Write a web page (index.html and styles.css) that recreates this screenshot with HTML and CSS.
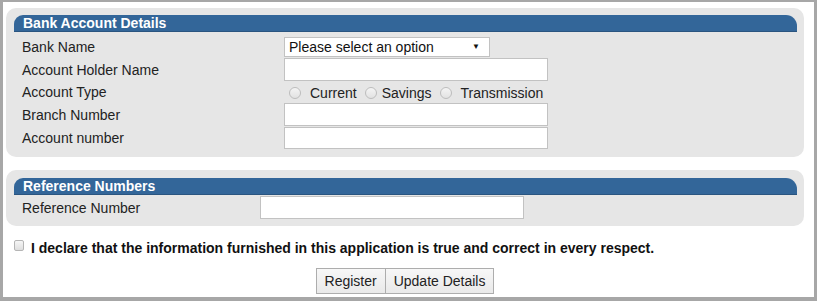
FILE: index.html
```html
<!DOCTYPE html>
<html>
<head>
<meta charset="utf-8">
<link rel="stylesheet" href="styles.css">
</head>
<body>
<div class="frame">
  <section class="panel panel-bank">
    <h2 class="panel-head">Bank Account Details</h2>
    <div class="form-grid grid-bank">
      <label class="lbl">Bank Name</label>
      <div class="select-wrap">
        <select class="select"><option>Please select an option</option></select>
        <span class="arrow">&#9660;</span>
      </div>
      <label class="lbl">Account Holder Name</label>
      <input class="txt" type="text">
      <label class="lbl">Account Type</label>
      <div class="radios">
        <span class="opt"><input type="radio" name="t" class="radio"><span class="opt-text">Current</span></span>
        <span class="opt opt-tight"><input type="radio" name="t" class="radio"><span class="opt-text">Savings</span></span>
        <span class="opt"><input type="radio" name="t" class="radio"><span class="opt-text">Transmission</span></span>
      </div>
      <label class="lbl">Branch Number</label>
      <input class="txt" type="text">
      <label class="lbl">Account number</label>
      <input class="txt txt-short" type="text">
    </div>
  </section>

  <section class="panel panel-ref">
    <h2 class="panel-head">Reference Numbers</h2>
    <div class="form-grid grid-ref">
      <label class="lbl">Reference Number</label>
      <input class="txt" type="text">
    </div>
  </section>

  <div class="declare">
    <input type="checkbox" class="check">
    <span class="declare-text">I declare that the information furnished in this application is true and correct in every respect.</span>
  </div>

  <div class="actions">
    <button class="btn">Register</button>
    <button class="btn btn-join">Update Details</button>
  </div>
</div>
</body>
</html>
```

FILE: styles.css
```css
html, body {
  margin: 0;
  padding: 0;
  background: #ffffff;
}

body {
  font-family: "Liberation Sans", Arial, sans-serif;
  font-size: 14px;
  color: #222222;
}

.frame {
  width: 817px;
  height: 301px;
  box-sizing: border-box;
  border: 3px solid #a7a7a7;
  border-top-width: 2px;
  border-bottom-width: 4px;
  padding: 6px 0 0 3px;
  background: #ffffff;
}

.panel {
  width: 798px;
  box-sizing: border-box;
  background: #e6e6e6;
  border-radius: 10px;
  padding: 7px 7px 8px 8px;
}

.panel-ref {
  margin-top: 13px;
  padding-top: 8px;
  padding-bottom: 7px;
}

.panel-head {
  margin: 0;
  height: 17px;
  line-height: 17px;
  box-sizing: border-box;
  background: #336699;
  border-bottom: 1px solid #2a5580;
  color: #ffffff;
  font-size: 14px;
  font-weight: bold;
  padding-left: 9px;
  border-radius: 9px 11px 0 0;
}

.form-grid {
  display: grid;
  row-gap: 1px;
  align-items: center;
  padding-left: 8px;
}

.grid-bank {
  grid-template-columns: 262px 264px;
  margin-top: 5px;
}

.grid-ref {
  grid-template-columns: 238px 264px;
  margin-top: 1px;
}

.lbl {
  color: #222222;
  line-height: 16px;
}

.txt {
  width: 264px;
  height: 23px;
  box-sizing: border-box;
  border: 1px solid #c2c2c2;
  background: #ffffff;
  margin: 0;
  padding: 0 4px;
  font: inherit;
}

.txt-short {
  height: 22px;
}

.select-wrap {
  position: relative;
  width: 206px;
  height: 20px;
}

.select {
  appearance: none;
  -webkit-appearance: none;
  width: 206px;
  height: 20px;
  box-sizing: border-box;
  border: 1px solid #c2c2c2;
  background: #ffffff;
  margin: 0;
  padding: 0 4px;
  font-family: "Liberation Sans", Arial, sans-serif;
  font-size: 14px;
  color: #111111;
}

.arrow {
  position: absolute;
  right: 10px;
  top: 5px;
  font-size: 8px;
  line-height: 10px;
  color: #111111;
  pointer-events: none;
}

.radios {
  height: 19px;
  display: flex;
  align-items: center;
  padding-left: 5px;
  padding-top: 1px;
}

.opt {
  display: inline-flex;
  align-items: center;
  margin-right: 8px;
}

.radio {
  appearance: none;
  -webkit-appearance: none;
  width: 12px;
  height: 12px;
  margin: 0 9px 0 0;
  border: 1px solid #bdbdbd;
  border-radius: 50%;
  background: linear-gradient(#f4f4f4, #e2e2e2);
  box-sizing: border-box;
}

.opt-tight .radio {
  margin-right: 5px;
}

.opt-text {
  color: #222222;
}

.declare {
  display: flex;
  align-items: flex-start;
  margin-top: 14px;
  padding-left: 8px;
  height: 18px;
}

.check {
  appearance: none;
  -webkit-appearance: none;
  width: 10px;
  height: 11px;
  margin: 0 7px 0 0;
  border: 1px solid #b5b5b5;
  border-radius: 2px;
  background: linear-gradient(#f6f6f6, #dedede);
  box-sizing: border-box;
}

.declare-text {
  font-weight: bold;
  color: #111111;
  line-height: 16px;
}

.actions {
  width: 798px;
  display: flex;
  justify-content: center;
  margin-top: 10px;
}

.btn {
  height: 26px;
  box-sizing: border-box;
  border: 1px solid #adadad;
  background: linear-gradient(#f7f7f7, #e9e9e9);
  font-family: "Liberation Sans", Arial, sans-serif;
  font-size: 14px;
  color: #222222;
  padding: 0 8px;
  margin: 0;
  border-radius: 0;
}

.btn-join {
  margin-left: -1px;
}
```
